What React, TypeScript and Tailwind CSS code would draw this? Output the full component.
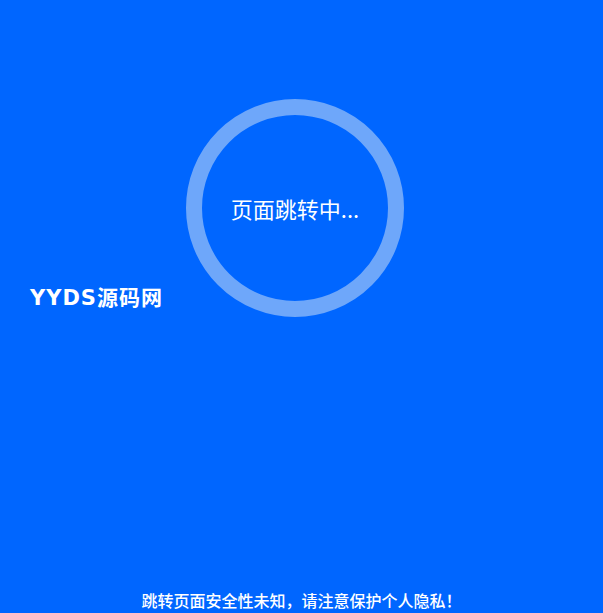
export default function App() {
  return (
    <div
      className="relative flex h-[613px] w-full flex-col overflow-hidden bg-[#0066ff] text-white"
      style={{ fontFamily: '"Noto Sans CJK SC", "Noto Sans", sans-serif' }}
    >
      {/* Loading ring */}
      <div className="ml-[186px] mt-[99px] flex h-[218px] w-[218px] items-center justify-center rounded-full border-[16px] border-[#6ea7fa]">
        <span className="text-[22px] leading-none">页面跳转中...</span>
      </div>

      {/* Logo */}
      <div
        className="absolute left-[30px] top-[284px] text-[21px] font-bold leading-[28px] tracking-[1px]"
        style={{ fontFamily: '"DejaVu Sans", "Noto Sans CJK SC", sans-serif' }}
      >
        YYDS源码网
      </div>

      {/* Footer notice */}
      <p className="mt-auto pb-[3px] text-center text-[16px] font-medium leading-[20px]">
        跳转页面安全性未知，请注意保护个人隐私！
      </p>
    </div>
  );
}
